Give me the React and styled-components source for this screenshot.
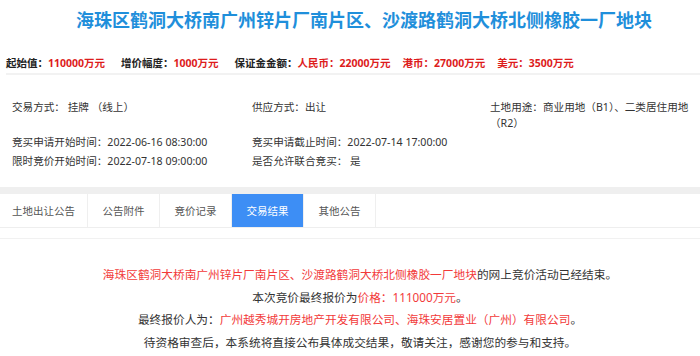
import React from "react";
import styled, { createGlobalStyle } from "styled-components";

const GlobalStyle = createGlobalStyle`
  html, body { margin: 0; padding: 0; background: #fff; }
  body {
    font-family: "Noto Sans", "Noto Sans CJK SC", sans-serif;
    color: #333;
  }
  * { box-sizing: border-box; }
`;

const Page = styled.div`
  width: 700px;
  overflow: hidden;
`;

const Title = styled.h1`
  margin: 0;
  padding: 8px 0 0 28px;
  text-align: center;
  font-size: 18px;
  line-height: 24px;
  font-weight: 700;
  color: #1f8fdb;
  white-space: nowrap;
`;

const StatsRow = styled.div`
  display: flex;
  gap: 16px;
  margin-top: 23px;
  padding: 0 0 2px 6px;
  font-size: 10.5px;
  line-height: 16px;
  font-weight: 700;
  color: #222;
  white-space: nowrap;
`;

const Stat = styled.div`
  display: flex;
`;

const Currencies = styled.div`
  display: flex;
  gap: 12px;
`;

const Red = styled.span`
  color: #dd1c1c;
`;

const InfoGrid = styled.div`
  margin-left: 6px;
  border-top: 2px solid #f2f2f2;
  padding: 24px 8px 18px 6px;
  display: grid;
  grid-template-columns: 240px 238px 1fr;
  row-gap: 3px;
  font-size: 10.6px;
  line-height: 16px;
  color: #333;
`;

const InfoItem = styled.div`
  white-space: ${(p) => (p.$wrap ? "normal" : "nowrap")};
`;

const Band = styled.div`
  height: 7px;
  background: #efefef;
`;

const TabBar = styled.div`
  display: flex;
  height: 34px;
  border-bottom: 1px solid #eeeeee;
`;

const Tab = styled.div`
  display: flex;
  align-items: center;
  justify-content: center;
  min-width: 72px;
  padding: 0 12px;
  border-right: 1px solid #efefef;
  font-size: 10.5px;
  color: ${(p) => (p.$active ? "#fff" : "#555")};
  background: ${(p) => (p.$active ? "#3d8ef5" : "#fff")};
`;

const Divider = styled.div`
  margin-top: 10px;
  border-top: 1px solid #f1f1f1;
`;

const Result = styled.div`
  padding: 24px 0 0 20px;
  text-align: center;
  font-size: 11.7px;
  line-height: 22.7px;
  color: #333;
  white-space: nowrap;
`;

const Hi = styled.span`
  color: #f23a3a;
`;

const tabs = ["土地出让公告", "公告附件", "竞价记录", "交易结果", "其他公告"];

export default function App() {
  return (
    <Page>
      <GlobalStyle />
      <Title>海珠区鹤洞大桥南广州锌片厂南片区、沙渡路鹤洞大桥北侧橡胶一厂地块</Title>
      <StatsRow>
        <Stat>
          起始值：<Red>110000万元</Red>
        </Stat>
        <Stat>
          增价幅度：<Red>1000万元</Red>
        </Stat>
        <Stat>
          保证金金额：
          <Currencies>
            <Red>人民币：22000万元</Red>
            <Red>港币：27000万元</Red>
            <Red>美元：3500万元</Red>
          </Currencies>
        </Stat>
      </StatsRow>
      <InfoGrid>
        <InfoItem>交易方式： 挂牌 （线上）</InfoItem>
        <InfoItem>供应方式：出让</InfoItem>
        <InfoItem $wrap>土地用途：商业用地（B1）、二类居住用地（R2）</InfoItem>
        <InfoItem>竞买申请开始时间：2022-06-16 08:30:00</InfoItem>
        <InfoItem>竞买申请截止时间：2022-07-14 17:00:00</InfoItem>
        <InfoItem />
        <InfoItem>限时竞价开始时间：2022-07-18 09:00:00</InfoItem>
        <InfoItem>是否允许联合竞买： 是</InfoItem>
        <InfoItem />
      </InfoGrid>
      <Band />
      <TabBar>
        {tabs.map((t) => (
          <Tab key={t} $active={t === "交易结果"}>
            {t}
          </Tab>
        ))}
      </TabBar>
      <Divider />
      <Result>
        <div>
          <Hi>海珠区鹤洞大桥南广州锌片厂南片区、沙渡路鹤洞大桥北侧橡胶一厂地块</Hi>的网上竞价活动已经结束。
        </div>
        <div>
          本次竞价最终报价为<Hi>价格：111000万元</Hi>。
        </div>
        <div>
          最终报价人为：<Hi>广州越秀城开房地产开发有限公司、海珠安居置业（广州）有限公司</Hi>。
        </div>
        <div>待资格审查后，本系统将直接公布具体成交结果，敬请关注，感谢您的参与和支持。</div>
      </Result>
    </Page>
  );
}
